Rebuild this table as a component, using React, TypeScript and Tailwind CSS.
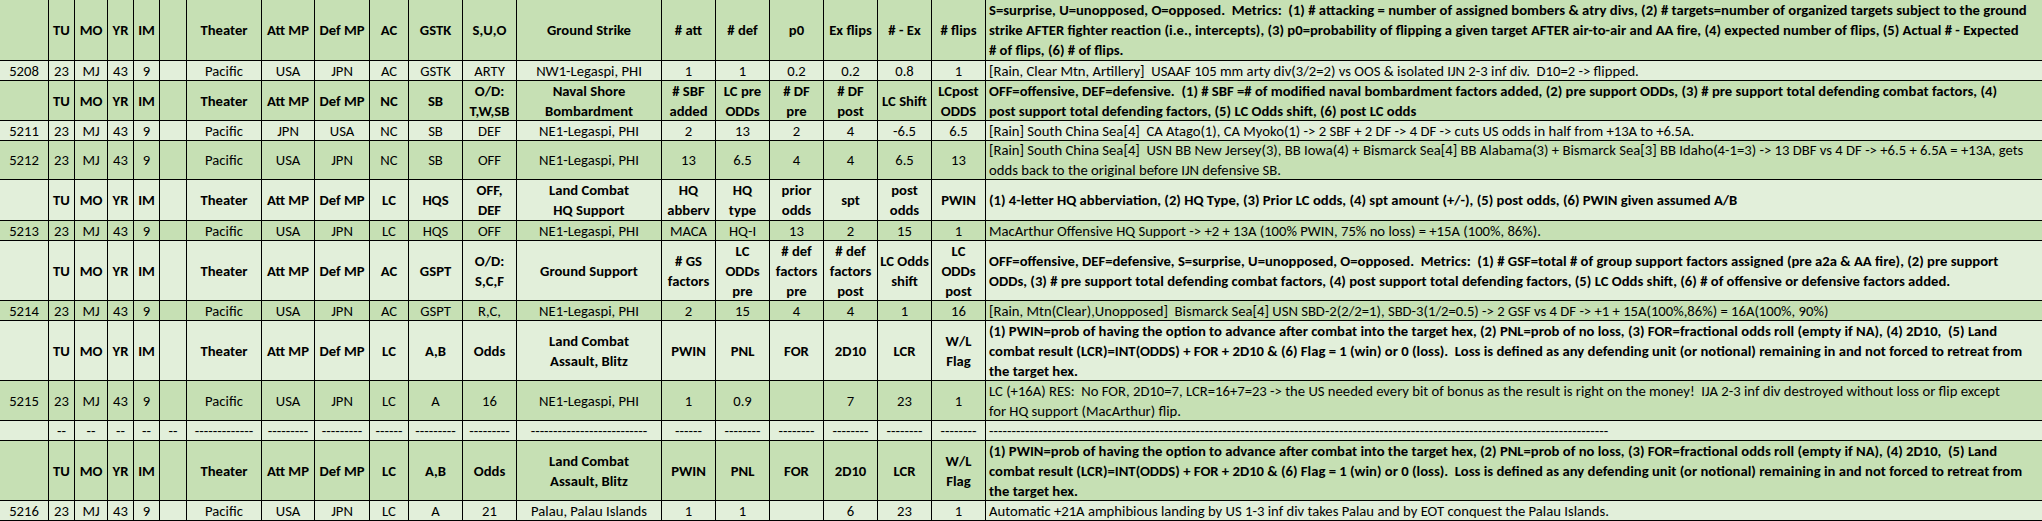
import React from "react";

const COLS =
  "grid grid-cols-[49px_26px_33px_26px_26px_27px_75px_53px_55px_39px_54px_54px_145px_54px_54px_54px_54px_54px_54px_1056px]";
const DARK = "bg-[#c6e0b4]";
const LIGHT = "bg-[#e2efda]";

type Row = { h: string; bg: string; bold?: boolean; cells: string[]; text: string[] };

const H = ["", "TU", "MO", "YR", "IM", "", "Theater", "Att MP", "Def MP"];
const D = (id: string) => [id, "23", "MJ", "43", "9", "", "Pacific"];

const LC_HDR = [...H, "LC", "A,B", "Odds", "Land Combat\nAssault, Blitz", "PWIN", "PNL", "FOR", "2D10", "LCR", "W/L\nFlag"];
const LC_TEXT = [
  "(1) PWIN=prob of having the option to advance after combat into the target hex, (2) PNL=prob of no loss, (3) FOR=fractional odds roll (empty if NA), (4) 2D10,  (5) Land",
  "combat result (LCR)=INT(ODDS) + FOR + 2D10 & (6) Flag = 1 (win) or 0 (loss).  Loss is defined as any defending unit (or notional) remaining in and not forced to retreat from",
  "the target hex.",
];

const ROWS: Row[] = [
  {
    h: "h-[61px]",
    bg: DARK,
    bold: true,
    cells: [...H, "AC", "GSTK", "S,U,O", "Ground Strike", "# att", "# def", "p0", "Ex flips", "# - Ex", "# flips"],
    text: [
      "S=surprise, U=unopposed, O=opposed.  Metrics:  (1) # attacking = number of assigned bombers & atry divs, (2) # targets=number of organized targets subject to the ground",
      "strike AFTER fighter reaction (i.e., intercepts), (3) p0=probability of flipping a given target AFTER air-to-air and AA fire, (4) expected number of flips, (5) Actual # - Expected",
      "# of flips, (6) # of flips.",
    ],
  },
  {
    h: "h-[20px]",
    bg: LIGHT,
    cells: [...D("5208"), "USA", "JPN", "AC", "GSTK", "ARTY", "NW1-Legaspi, PHI", "1", "1", "0.2", "0.2", "0.8", "1"],
    text: ["[Rain, Clear Mtn, Artillery]  USAAF 105 mm arty div(3/2=2) vs OOS & isolated IJN 2-3 inf div.  D10=2 -> flipped."],
  },
  {
    h: "h-[40px]",
    bg: DARK,
    bold: true,
    cells: [...H, "NC", "SB", "O/D:\nT,W,SB", "Naval Shore\nBombardment", "# SBF\nadded", "LC pre\nODDs", "# DF\npre", "# DF\npost", "LC Shift", "LCpost\nODDS"],
    text: [
      "OFF=offensive, DEF=defensive.  (1) # SBF =# of modified naval bombardment factors added, (2) pre support ODDs, (3) # pre support total defending combat factors, (4)",
      "post support total defending factors, (5) LC Odds shift, (6) post LC odds",
    ],
  },
  {
    h: "h-[20px]",
    bg: LIGHT,
    cells: [...D("5211"), "JPN", "USA", "NC", "SB", "DEF", "NE1-Legaspi, PHI", "2", "13", "2", "4", "-6.5", "6.5"],
    text: ["[Rain] South China Sea[4]  CA Atago(1), CA Myoko(1) -> 2 SBF + 2 DF -> 4 DF -> cuts US odds in half from +13A to +6.5A."],
  },
  {
    h: "h-[39px]",
    bg: DARK,
    cells: [...D("5212"), "USA", "JPN", "NC", "SB", "OFF", "NE1-Legaspi, PHI", "13", "6.5", "4", "4", "6.5", "13"],
    text: [
      "[Rain] South China Sea[4]  USN BB New Jersey(3), BB Iowa(4) + Bismarck Sea[4] BB Alabama(3) + Bismarck Sea[3] BB Idaho(4-1=3) -> 13 DBF vs 4 DF -> +6.5 + 6.5A = +13A, gets",
      "odds back to the original before IJN defensive SB.",
    ],
  },
  {
    h: "h-[41px]",
    bg: LIGHT,
    bold: true,
    cells: [...H, "LC", "HQS", "OFF,\nDEF", "Land Combat\nHQ Support", "HQ\nabberv", "HQ\ntype", "prior\nodds", "spt", "post\nodds", "PWIN"],
    text: ["(1) 4-letter HQ abberviation, (2) HQ Type, (3) Prior LC odds, (4) spt amount (+/-), (5) post odds, (6) PWIN given assumed A/B"],
  },
  {
    h: "h-[20px]",
    bg: DARK,
    cells: [...D("5213"), "USA", "JPN", "LC", "HQS", "OFF", "NE1-Legaspi, PHI", "MACA", "HQ-I", "13", "2", "15", "1"],
    text: ["MacArthur Offensive HQ Support -> +2 + 13A (100% PWIN, 75% no loss) = +15A (100%, 86%)."],
  },
  {
    h: "h-[60px]",
    bg: LIGHT,
    bold: true,
    cells: [...H, "AC", "GSPT", "O/D:\nS,C,F", "Ground Support", "# GS\nfactors", "LC\nODDs\npre", "# def\nfactors\npre", "# def\nfactors\npost", "LC Odds\nshift", "LC\nODDs\npost"],
    text: [
      "OFF=offensive, DEF=defensive, S=surprise, U=unopposed, O=opposed.  Metrics:  (1) # GSF=total # of group support factors assigned (pre a2a & AA fire), (2) pre support",
      "ODDs, (3) # pre support total defending combat factors, (4) post support total defending factors, (5) LC Odds shift, (6) # of offensive or defensive factors added.",
    ],
  },
  {
    h: "h-[20px]",
    bg: DARK,
    cells: [...D("5214"), "USA", "JPN", "AC", "GSPT", "R,C,", "NE1-Legaspi, PHI", "2", "15", "4", "4", "1", "16"],
    text: ["[Rain, Mtn(Clear),Unopposed]  Bismarck Sea[4] USN SBD-2(2/2=1), SBD-3(1/2=0.5) -> 2 GSF vs 4 DF -> +1 + 15A(100%,86%) = 16A(100%, 90%)"],
  },
  { h: "h-[60px]", bg: LIGHT, bold: true, cells: LC_HDR, text: LC_TEXT },
  {
    h: "h-[40px]",
    bg: DARK,
    cells: [...D("5215"), "USA", "JPN", "LC", "A", "16", "NE1-Legaspi, PHI", "1", "0.9", "", "7", "23", "1"],
    text: [
      "LC (+16A) RES:  No FOR, 2D10=7, LCR=16+7=23 -> the US needed every bit of bonus as the result is right on the money!  IJA 2-3 inf div destroyed without loss or flip except",
      "for HQ support (MacArthur) flip.",
    ],
  },
  {
    h: "h-[20px]",
    bg: LIGHT,
    cells: [
      "",
      "--",
      "--",
      "--",
      "--",
      "--",
      "-------------",
      "---------",
      "---------",
      "------",
      "---------",
      "---------",
      "--------------------------",
      "------",
      "--------",
      "--------",
      "--------",
      "--------",
      "--------",
    ],
    text: ["-".repeat(138)],
  },
  { h: "h-[60px]", bg: DARK, bold: true, cells: LC_HDR, text: LC_TEXT },
  {
    h: "h-[20px]",
    bg: LIGHT,
    cells: [...D("5216"), "USA", "JPN", "LC", "A", "21", "Palau, Palau Islands", "1", "1", "", "6", "23", "1"],
    text: ["Automatic +21A amphibious landing by US 1-3 inf div takes Palau and by EOT conquest the Palau Islands."],
  },
];

export default function App() {
  return (
    <div className="w-[2042px] h-[521px] overflow-hidden bg-white text-black text-[14.67px] font-['Carlito','Lato',sans-serif]">
      {ROWS.map((r, ri) => (
        <div key={ri} className={`${COLS} ${r.h} ${r.bg} ${r.bold ? "font-bold" : "font-normal"}`}>
          {r.cells.map((c, i) => (
            <div
              key={i}
              className="flex flex-col items-center justify-center overflow-hidden border-r border-b border-black text-center leading-[20px]"
            >
              {c.split("\n").map((l, j) => (
                <div key={j} className="whitespace-pre">
                  {l}
                </div>
              ))}
            </div>
          ))}
          <div className="flex flex-col items-start justify-center overflow-hidden border-b border-black pl-[3px] leading-[20px]">
            {r.text.map((l, j) => (
              <div key={j} className="whitespace-pre">
                {l}
              </div>
            ))}
          </div>
        </div>
      ))}
    </div>
  );
}
